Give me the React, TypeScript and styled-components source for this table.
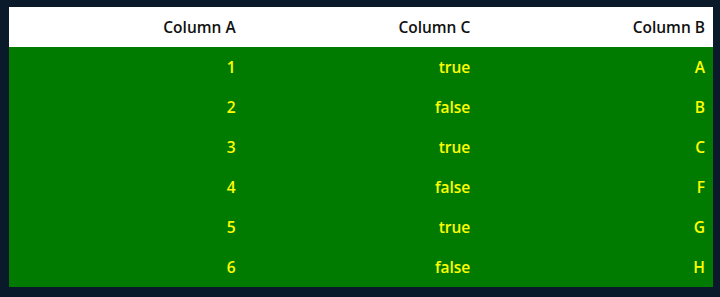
import styled, { createGlobalStyle } from 'styled-components';

const GlobalStyle = createGlobalStyle`
html, body {
    margin: 0;
    padding: 0;
    background-color: #0a1a2b;
}
`;

const Page = styled.div`
min-height: 297px;
box-sizing: border-box;
padding: 7px 7px 0 9px;
background-color: #0a1a2b;
`;

const Table = styled.table`
width: 100%;
border-collapse: collapse;
table-layout: fixed;
font-family: "Open Sans", "Noto Sans", sans-serif;
font-size: 15.5px;
font-weight: 600;
`;

const HeadCell = styled.th`
height: 40px;
padding: 0 8px;
text-align: right;
background-color: #ffffff;
color: #111111;
font-weight: 600;
`;

const Row = styled.tr`
background-color: #007b00;
`;

const Cell = styled.td`
height: 40px;
padding: 0 8px;
text-align: right;
color: #ffff00;
`;

const rows = [
    { a: 1, c: true, b: 'A' },
    { a: 2, c: false, b: 'B' },
    { a: 3, c: true, b: 'C' },
    { a: 4, c: false, b: 'F' },
    { a: 5, c: true, b: 'G' },
    { a: 6, c: false, b: 'H' },
];

export default function App() {
    return (
        <Page>
            <GlobalStyle/>
            <Table>
                <thead>
                    <tr>
                        <HeadCell>Column A</HeadCell>
                        <HeadCell>Column C</HeadCell>
                        <HeadCell>Column B</HeadCell>
                    </tr>
                </thead>
                <tbody>
                    {rows.map(r => (
                        <Row key={r.a}>
                            <Cell>{r.a}</Cell>
                            <Cell>{String(r.c)}</Cell>
                            <Cell>{r.b}</Cell>
                        </Row>
                    ))}
                </tbody>
            </Table>
        </Page>
    );
}
